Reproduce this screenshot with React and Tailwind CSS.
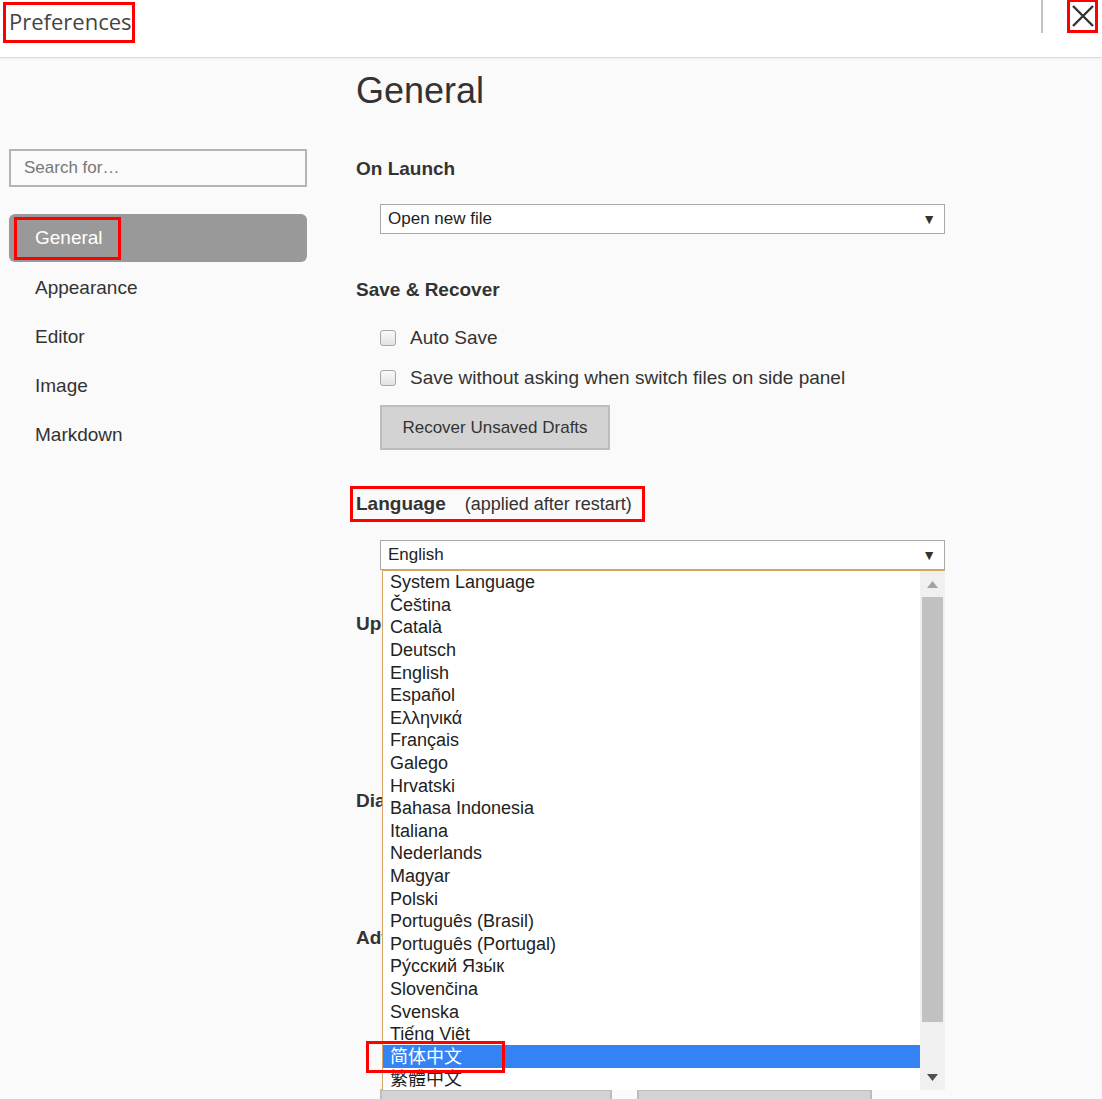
import React from 'react';

const languages = [
  'System Language', 'Čeština', 'Català', 'Deutsch', 'English', 'Español', 'Ελληνικά',
  'Français', 'Galego', 'Hrvatski', 'Bahasa Indonesia', 'Italiana', 'Nederlands', 'Magyar',
  'Polski', 'Português (Brasil)', 'Português (Portugal)', 'Ру́сский Язы́к', 'Slovenčina',
  'Svenska', 'Tiếng Việt', '简体中文', '繁體中文',
];

function SelectBox({ value }) {
  return (
    <div className="ml-[24px] w-[565px] h-[30px] bg-white border border-[#a9a9a9] flex items-center justify-between pl-[7px] pr-[8px] text-[17px] text-[#222]">
      <span>{value}</span>
      <span className="text-[14px] text-[#333]">▼</span>
    </div>
  );
}

function Checkbox({ label }) {
  return (
    <div className="h-[40px] flex items-center ml-[24px] gap-[14px]">
      <div className="w-[16px] h-[16px] rounded-[3px] border border-[#a6a6a6] bg-gradient-to-b from-[#fafafa] to-[#e2e2e2]" />
      <span className="text-[19px] text-[#333]">{label}</span>
    </div>
  );
}

export default function App() {
  return (
    <div className="w-[1102px] h-[1099px] relative overflow-hidden bg-[#fafafa] text-[#333] font-['Liberation_Sans',Arial,sans-serif]">
      {/* Header */}
      <div className="h-[58px] bg-white border-b border-[#dcdcdc] shadow-[0_1px_2px_rgba(0,0,0,0.06)] flex items-start justify-between">
        <div className="ml-[3px] mt-[2px] w-[132px] h-[41px] border-[3px] border-[#ff0000] flex items-start pl-[3px] pt-[3px]">
          <span className="font-['Open_Sans',sans-serif] text-[22px] text-[#444] leading-[26px]">Preferences</span>
        </div>
        <div className="flex items-start">
          <div className="w-[2px] h-[33px] bg-[#c4c4c4] mr-[24px]" />
          <div className="w-[31px] h-[34px] -mt-[1px] border-[3px] border-[#ff0000] mr-[4px] flex items-center justify-center">
            <svg width="22" height="22" viewBox="0 0 22 22">
              <path d="M1 1L21 21M21 1L1 21" stroke="#333" strokeWidth="2.4" />
            </svg>
          </div>
        </div>
      </div>

      <div className="flex">
        {/* Sidebar */}
        <div className="w-[298px] ml-[9px] mr-[49px] shrink-0">
          <div className="mt-[91px] h-[38px] border-2 border-[#b4b4b4] bg-[#fafafa] flex items-center pl-[13px] text-[17px] text-[#777]">
            Search for…
          </div>
          <div className="mt-[27px] h-[48px] rounded-[6px] bg-[#999999] flex items-center pl-[5px]">
            <div className="h-[43px] border-[3px] border-[#ff0000] flex items-center pl-[18px] pr-[15px] text-[19px] text-white">
              General
            </div>
          </div>
          {['Appearance', 'Editor', 'Image', 'Markdown'].map(item => (
            <div key={item} className="h-[49px] pt-[3px] flex items-center pl-[26px] text-[19px] text-[#333]">
              {item}
            </div>
          ))}
        </div>

        {/* Main */}
        <div className="flex-1">
          <h1 className="mt-[12px] text-[36px] leading-[41px] text-[#333]">General</h1>

          <h2 className="mt-[47px] text-[19px] leading-[22px] font-bold">On Launch</h2>
          <div className="mt-[24px]">
            <SelectBox value="Open new file" />
          </div>

          <h2 className="mt-[45px] text-[19px] leading-[22px] font-bold">Save &amp; Recover</h2>
          <div className="mt-[17px]">
            <Checkbox label="Auto Save" />
            <Checkbox label="Save without asking when switch files on side panel" />
          </div>
          <button className="mt-[7px] ml-[24px] w-[230px] h-[45px] bg-[#d3d3d3] border-2 border-[#bdbdbd] text-[17px] text-[#333]">
            Recover Unsaved Drafts
          </button>

          <div className="mt-[36px] -ml-[6px] w-[295px] h-[36px] border-[3px] border-[#ff0000] flex items-center pl-[3px]">
            <span className="text-[19px] font-bold">Language</span>
            <span className="ml-[19px] text-[18px]">(applied after restart)</span>
          </div>
          <div className="mt-[18px]">
            <SelectBox value="English" />
          </div>

          {/* these sections sit behind the open dropdown */}
          <h2 className="mt-[43px] text-[19px] leading-[22px] font-bold">Update</h2>
          <h2 className="mt-[155px] text-[19px] leading-[22px] font-bold">Diagnostic</h2>
          <h2 className="mt-[115px] text-[19px] leading-[22px] font-bold">Advanced</h2>
          <div className="mt-[140px] ml-[24px] flex gap-[25px]">
            <div className="w-[232px] h-[44px] bg-[#d3d3d3] border-2 border-[#bdbdbd]" />
            <div className="w-[235px] h-[44px] bg-[#d3d3d3] border-2 border-[#bdbdbd]" />
          </div>
        </div>
      </div>

      {/* Open language dropdown */}
      <div className="absolute left-[382px] top-[570px] w-[563px] h-[520px] bg-white border-l border-t border-[#d9a567] flex">
        <div className="flex-1 overflow-hidden">
          {languages.map(lang => {
            const selected = lang === '简体中文';
            return (
              <div
                key={lang}
                className={`h-[22.6px] flex items-center pl-[7px] text-[18px] leading-none font-['Liberation_Sans','Noto_Sans_CJK_SC','Noto_Sans_CJK_TC',sans-serif] ${
                  selected ? 'bg-[#3483f5] text-white' : 'text-[#222]'
                }`}
              >
                {lang}
              </div>
            );
          })}
        </div>
        <div className="w-[25px] bg-[#f0f0f0] flex flex-col items-center">
          <div className="h-[26px] flex items-center justify-center">
            <svg width="11" height="7" viewBox="0 0 11 7"><path d="M5.5 0L11 7H0Z" fill="#a3a3a3" /></svg>
          </div>
          <div className="w-[21px] h-[425px] bg-[#c1c1c1]" />
          <div className="flex-1 flex items-end pb-[9px]">
            <svg width="11" height="7" viewBox="0 0 11 7"><path d="M0 0H11L5.5 7Z" fill="#505050" /></svg>
          </div>
        </div>
      </div>

      {/* Annotation on selected language */}
      <div className="absolute left-[366px] top-[1041px] w-[139px] h-[32px] border-[3px] border-[#ff0000]" />
    </div>
  );
}
